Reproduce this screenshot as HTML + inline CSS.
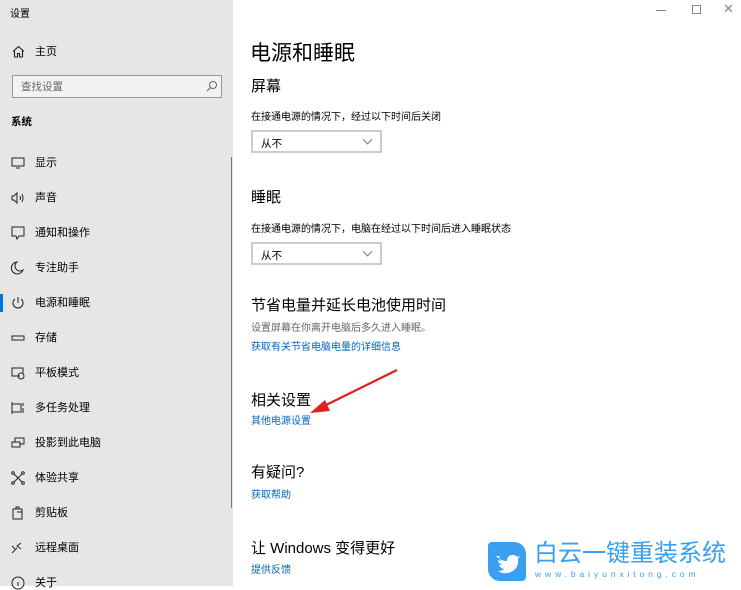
<!DOCTYPE html>
<html><head><meta charset="utf-8"><style>
*{margin:0;padding:0;box-sizing:border-box}
body{width:741px;height:586px;overflow:hidden;background:#fff;font-family:"Liberation Sans","Noto Sans CJK SC",sans-serif;position:relative;color:#000}
.a{position:absolute;white-space:nowrap}
#side{position:absolute;left:0;top:0;width:233px;height:586px;background:#e6e6e6}
.it{position:absolute;left:35px;font-size:11px;color:#000;line-height:14px}
.ic{position:absolute;left:10px;width:16px;height:14px}
.h{font-size:15px;line-height:18px}
.s{font-size:10px;line-height:13px;color:#000}
.l{font-size:10px;line-height:13px;color:#0067c0}
.dd{position:absolute;left:251px;width:131px;height:23px;border:2px solid #ccc;font-size:10.5px;padding:4px 0 0 8px}
.dd:after{content:"";position:absolute;right:9px;top:4px;width:6px;height:6px;border-right:1px solid #777;border-bottom:1px solid #777;transform:rotate(45deg)}
</style></head><body>
<div id="side">
<div class="a" style="left:10px;top:5px;font-size:10px">设置</div>
<svg class="a" style="left:12px;top:45px" width="13" height="13" viewBox="0 0 13 13" fill="none" stroke="#222" stroke-width="1.1"><path d="M1 6.5 6.5 1.5 12 6.5M2.5 5v7h3V8.5h2V12h3V5"/></svg>
<div class="it" style="top:45px">主页</div>
<div class="a" style="left:12px;top:75px;width:210px;height:23px;border:1.5px solid #999;background:#f2f2f2;font-size:10.5px;color:#666;padding:3px 0 0 8px">查找设置</div>
<svg class="a" style="left:206px;top:80px" width="12" height="12" viewBox="0 0 12 12" fill="none" stroke="#666"><circle cx="7" cy="5" r="3.5"/><path d="M4.5 7.5 1 11"/></svg>
<div class="a" style="left:11px;top:114px;font-size:10.5px;font-weight:bold">系统</div>
<div class="a" style="left:231px;top:157px;width:1px;height:351px;background:#777"></div>
<div class="a" style="left:0;top:294px;width:3px;height:18px;background:#0078d7"></div>
<svg class="ic" style="top:156px" viewBox="0 0 16 14" fill="none" stroke="#222"><rect x="2" y="2" width="12" height="8"/><path d="M6 12h4"/></svg><div class="it" style="top:156px">显示</div>
<svg class="ic" style="top:191px" viewBox="0 0 16 14" fill="none" stroke="#222"><path d="M2 5h2l3-3v10l-3-3H2zM10 5q1 2 0 4M12 3q2 4 0 8"/></svg><div class="it" style="top:191px">声音</div>
<svg class="ic" style="top:226px" viewBox="0 0 16 14" fill="none" stroke="#222"><path d="M2 1h12v9H9l-2 3-1-3H2z"/></svg><div class="it" style="top:226px">通知和操作</div>
<svg class="ic" style="top:261px" viewBox="0 0 16 14" fill="none" stroke="#222"><path d="M7 1a6 6 0 1 0 6 8A5 5 0 0 1 7 1z"/></svg><div class="it" style="top:261px">专注助手</div>
<svg class="ic" style="top:296px" viewBox="0 0 16 14" fill="none" stroke="#222"><path d="M5 3a5 5 0 1 0 6 0M8 1v6"/></svg><div class="it" style="top:296px">电源和睡眠</div>
<svg class="ic" style="top:331px" viewBox="0 0 16 14" fill="none" stroke="#222"><rect x="2" y="5" width="12" height="4"/></svg><div class="it" style="top:331px">存储</div>
<svg class="ic" style="top:366px" viewBox="0 0 16 14" fill="none" stroke="#222"><path d="M10 10H2V2h11v5"/><circle cx="11" cy="10" r="3"/></svg><div class="it" style="top:366px">平板模式</div>
<svg class="ic" style="top:401px" viewBox="0 0 16 14" fill="none" stroke="#222"><path d="M2 1v12M2 3h9v8H2M13 2v3M13 7v5"/></svg><div class="it" style="top:401px">多任务处理</div>
<svg class="ic" style="top:436px" viewBox="0 0 16 14" fill="none" stroke="#222"><rect x="2" y="6" width="8" height="5"/><path d="M5 6V2h9v6h-4"/></svg><div class="it" style="top:436px">投影到此电脑</div>
<svg class="ic" style="top:471px" viewBox="0 0 16 14" fill="none" stroke="#222"><path d="M4 3l8 8M12 3l-8 8"/><circle cx="3" cy="2" r="1.3"/><circle cx="13" cy="2" r="1.3"/><circle cx="3" cy="12" r="1.3"/><circle cx="13" cy="12" r="1.3"/></svg><div class="it" style="top:471px">体验共享</div>
<svg class="ic" style="top:506px" viewBox="0 0 16 14" fill="none" stroke="#222"><path d="M3 3h9v10H3zM6 3V1h3v2M7 6h5v7"/></svg><div class="it" style="top:506px">剪贴板</div>
<svg class="ic" style="top:541px" viewBox="0 0 16 14" fill="none" stroke="#222"><path d="M2 12l5-5M2 5l3 3M11 2 7 5l4 3"/></svg><div class="it" style="top:541px">远程桌面</div>
<svg class="ic" style="top:576px" viewBox="0 0 16 14" fill="none" stroke="#222"><circle cx="8" cy="7" r="6"/><path d="M8 6v4"/></svg><div class="it" style="top:576px">关于</div>
</div>
<div class="a" style="left:656px;top:10px;width:10px;height:1px;background:#888"></div>
<div class="a" style="left:692px;top:5px;width:9px;height:9px;border:1px solid #888"></div>
<div class="a" style="left:723px;top:1px;font-size:13px;color:#888">✕</div>
<div class="a" style="left:250px;top:40px;font-size:21px;line-height:28px">电源和睡眠</div>
<div class="a h" style="left:251px;top:78px">屏幕</div>
<div class="a s" style="left:251px;top:111px">在接通电源的情况下，经过以下时间后关闭</div>
<div class="dd" style="top:130px">从不</div>
<div class="a h" style="left:251px;top:189px">睡眠</div>
<div class="a s" style="left:251px;top:223px">在接通电源的情况下，电脑在经过以下时间后进入睡眠状态</div>
<div class="dd" style="top:242px">从不</div>
<div class="a h" style="left:251px;top:297px">节省电量并延长电池使用时间</div>
<div class="a s" style="left:251px;top:322px;color:#666">设置屏幕在你离开电脑后多久进入睡眠。</div>
<div class="a l" style="left:251px;top:341px">获取有关节省电脑电量的详细信息</div>
<div class="a h" style="left:251px;top:392px">相关设置</div>
<div class="a l" style="left:251px;top:415px">其他电源设置</div>
<div class="a h" style="left:251px;top:464px">有疑问?</div>
<div class="a l" style="left:251px;top:489px">获取帮助</div>
<div class="a h" style="left:251px;top:540px">让 Windows 变得更好</div>
<div class="a l" style="left:251px;top:564px">提供反馈</div>
<svg class="a" style="left:0;top:0" width="741" height="586"><path d="M397 370 322 407" stroke="#e02020" stroke-width="2.2"/><path d="M310 413 325 400 330 411z" fill="#e02020"/></svg>
<div class="a" style="left:488px;top:542px;width:38px;height:39px;background:#3a9ff0;border-radius:4px 12px 4px 12px"></div>
<svg class="a" style="left:492px;top:548px" width="30" height="28" viewBox="0 0 30 28"><path d="M4 8q5 5 11 5q0-6 6-6q3 0 4 2l3-1-2 3q1 9-7 13q-7 3-13-1q4 0 6-2q-4-1-5-4h3q-4-2-4-5l3 1q-3-3-1-5z" fill="#fff"/></svg>
<div class="a" style="left:534px;top:540px;font-size:24px;line-height:28px;color:#3a9ff0">白云一键重装系统</div>
<div class="a" style="left:535px;top:569px;font-size:8.5px;line-height:10px;color:#3a9ff0;letter-spacing:3.9px">www.baiyunxitong.com</div>
</body></html>
